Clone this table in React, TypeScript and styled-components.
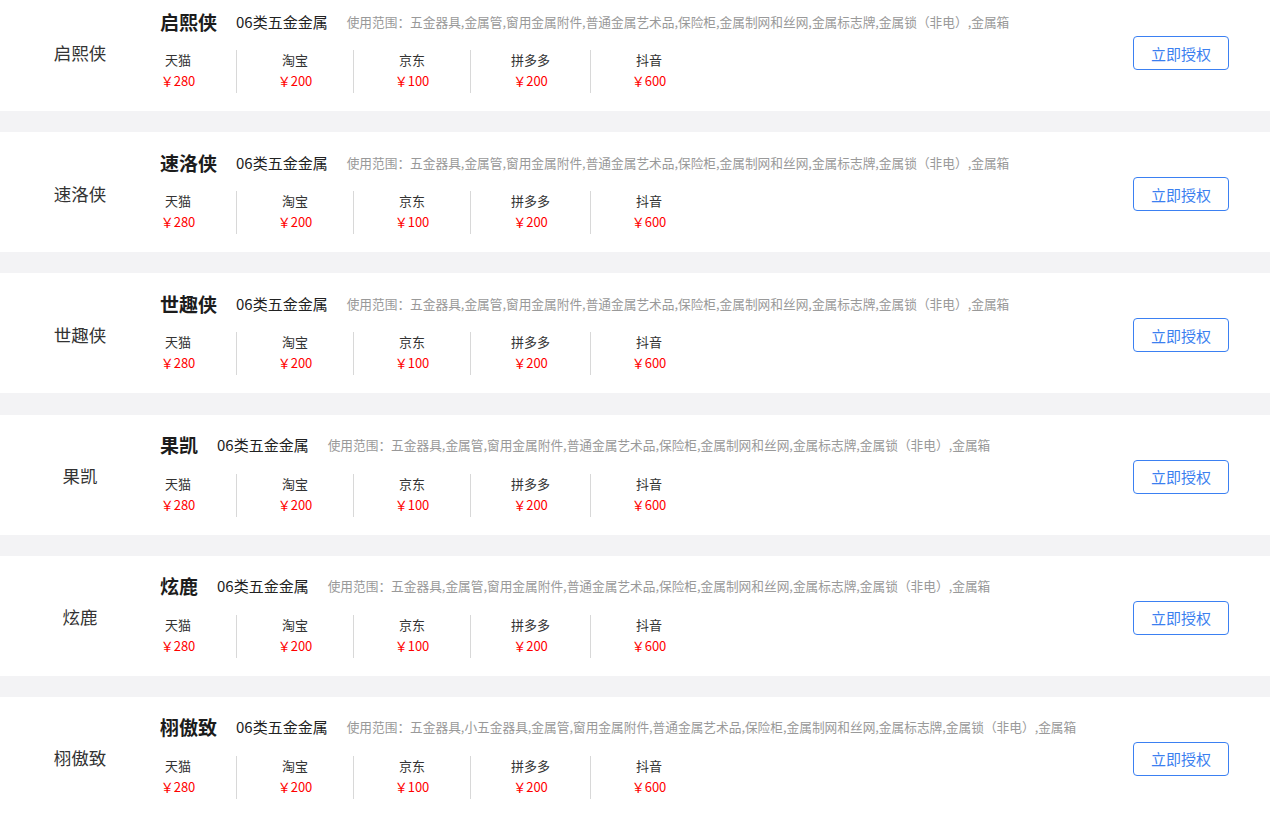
import React from 'react';
import styled, { createGlobalStyle } from 'styled-components';

interface Platform {
  name: string;
  price: number;
}

interface Brand {
  name: string;
  category: string;
  scope: string;
}

const basicScope =
  '五金器具,金属管,窗用金属附件,普通金属艺术品,保险柜,金属制网和丝网,金属标志牌,金属锁（非电）,金属箱';

const brands: Brand[] = [
  { name: '启熙侠', category: '06类五金金属', scope: basicScope },
  { name: '速洛侠', category: '06类五金金属', scope: basicScope },
  { name: '世趣侠', category: '06类五金金属', scope: basicScope },
  { name: '果凯', category: '06类五金金属', scope: basicScope },
  { name: '炫鹿', category: '06类五金金属', scope: basicScope },
  { name: '栩傲致', category: '06类五金金属', scope: '五金器具,小五金器具,' + basicScope.slice(5) },
];

const platforms: Platform[] = [
  { name: '天猫', price: 280 },
  { name: '淘宝', price: 200 },
  { name: '京东', price: 100 },
  { name: '拼多多', price: 200 },
  { name: '抖音', price: 600 },
];

const GlobalStyle = createGlobalStyle`
  html, body {
    margin: 0;
    padding: 0;
    background: #f3f3f5;
    font-family: 'Noto Sans CJK SC', 'Noto Sans', sans-serif;
  }
  #root {
    overflow: hidden;
    height: 814px;
  }
`;

const BrandCard = ({ brand }: { brand: Brand }) => (
  <Card>
    <SideName>{brand.name}</SideName>
    <Main>
      <TitleRow>
        <Title>{brand.name}</Title>
        <Category>{brand.category}</Category>
        <Scope>使用范围：{brand.scope}</Scope>
      </TitleRow>
      <PriceRow>
        {platforms.map((p) => (
          <PriceItem key={p.name}>
            <PlatformName>{p.name}</PlatformName>
            <Price>￥{p.price}</Price>
          </PriceItem>
        ))}
      </PriceRow>
    </Main>
    <Action>
      <AuthButton>立即授权</AuthButton>
    </Action>
  </Card>
);

const App = () => (
  <>
    <GlobalStyle />
    <List>
      {brands.map((b) => (
        <BrandCard key={b.name} brand={b} />
      ))}
    </List>
  </>
);

const List = styled.div`
  display: flex;
  flex-direction: column;
  gap: 21.2px;
  margin-top: -9px;
`;

const Card = styled.div`
  display: flex;
  height: 120px;
  background: #fff;
`;

const SideName = styled.div`
  width: 160px;
  flex-shrink: 0;
  display: flex;
  align-items: center;
  justify-content: center;
  padding-top: 2px;
  font-size: 17.5px;
  color: #333;
`;

const Main = styled.div`
  flex: 1;
  padding-top: 18px;
`;

const TitleRow = styled.div`
  display: flex;
  align-items: center;
  height: 24px;
  gap: 19px;
  white-space: nowrap;
`;

const Title = styled.span`
  font-size: 19px;
  font-weight: 700;
  color: #1c1c1c;
`;

const Category = styled.span`
  font-size: 15px;
  color: #222;
`;

const Scope = styled.span`
  font-size: 12.7px;
  color: #999;
`;

const PriceRow = styled.div`
  display: flex;
  margin-top: 17px;
`;

const PriceItem = styled.div`
  display: flex;
  flex-direction: column;
  align-items: center;
  min-width: 36px;
  height: 43px;
  padding: 0 40px;
  border-left: 1px solid #d8d8d8;

  &:first-child {
    padding-left: 0;
    border-left: none;
  }
`;

const PlatformName = styled.span`
  font-size: 13px;
  line-height: 20px;
  color: #333;
`;

const Price = styled.span`
  font-size: 13px;
  line-height: 22px;
  color: #ff0000;
`;

const Action = styled.div`
  display: flex;
  align-items: center;
  padding: 4px 41px 0 0;
`;

const AuthButton = styled.button`
  width: 96px;
  height: 34px;
  border: 1px solid #3b80f2;
  border-radius: 4px;
  background: #fff;
  color: #3b7ff0;
  font-family: inherit;
  font-size: 15px;
  cursor: pointer;
  padding: 0;
`;

export default App;
